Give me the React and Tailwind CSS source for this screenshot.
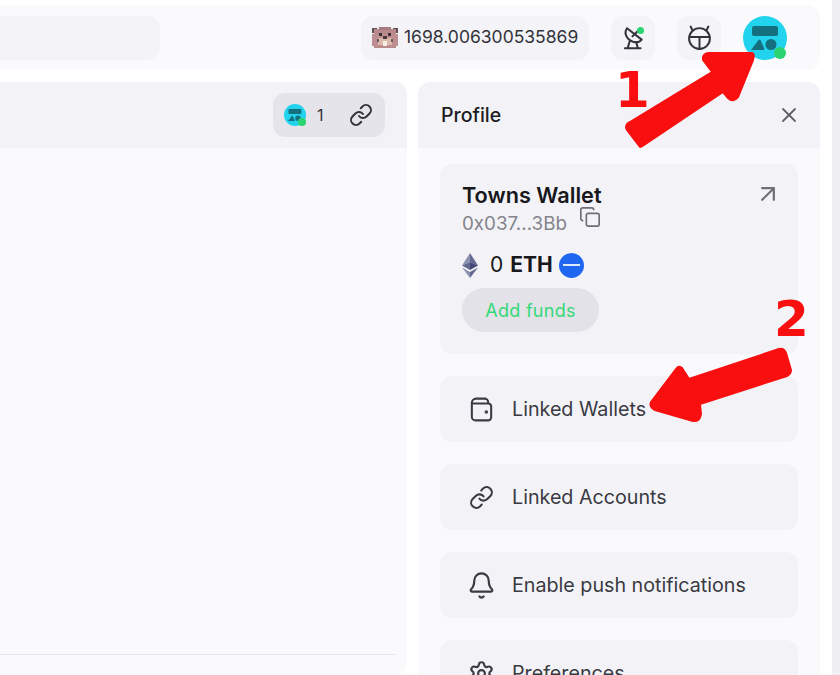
import React from 'react';
import { ArrowUpRight, Bell, Copy, Link, Settings, X } from 'lucide-react';

function Avatar({ size, dot }) {
  return (
    <div className="relative shrink-0" style={{ width: size, height: size }}>
      <svg viewBox="0 0 44 44" className="w-full h-full">
        <circle cx="22" cy="22" r="22" fill="#22d3ee" />
        <rect x="9" y="10" width="26" height="10" rx="2" fill="#14707f" />
        <path d="M8 34 L15.5 24 Q16.5 23 17.5 24 L21 32 Q22 34 20 34 Z" fill="#14707f" />
        <circle cx="28" cy="28.5" r="5.5" fill="#14707f" />
      </svg>
      <div className={`absolute rounded-full bg-[#2bd46f] ${dot}`} />
    </div>
  );
}

function Beaver() {
  return (
    <svg viewBox="0 0 28 24" className="w-[28px] h-[24px]" shapeRendering="crispEdges">
      <rect x="1" y="2" width="5" height="5" fill="#5f4d55" />
      <rect x="22" y="2" width="5" height="5" fill="#5f4d55" />
      <rect x="3" y="3" width="22" height="19" fill="#b98a8c" />
      <rect x="1" y="8" width="26" height="12" fill="#bd8f90" />
      <rect x="8" y="1" width="12" height="3" fill="#a67c82" />
      <rect x="8" y="7" width="3" height="3" fill="#3b3036" />
      <rect x="17" y="7" width="3" height="3" fill="#3b3036" />
      <rect x="7" y="12" width="14" height="7" fill="#dcb9ac" />
      <rect x="12" y="10" width="4" height="3" fill="#4a3a40" />
      <rect x="12" y="15" width="4" height="5" fill="#f5efe6" />
      <rect x="6" y="13" width="2" height="3" fill="#6b5860" />
      <rect x="20" y="13" width="2" height="3" fill="#6b5860" />
    </svg>
  );
}

function EthIcon() {
  return (
    <svg viewBox="0 0 16 25" className="w-[16px] h-[25px] shrink-0">
      <path d="M8 0 L0 12.5 L8 9 Z" fill="#8a92b2" />
      <path d="M8 0 L16 12.5 L8 9 Z" fill="#62688f" />
      <path d="M8 9 L0 12.5 L8 17 Z" fill="#62688f" />
      <path d="M8 9 L16 12.5 L8 17 Z" fill="#454a75" />
      <path d="M0 14.5 L8 25 L8 19 Z" fill="#8a92b2" />
      <path d="M16 14.5 L8 25 L8 19 Z" fill="#62688f" />
    </svg>
  );
}

function WalletIcon() {
  return (
    <svg viewBox="0 0 24 24" className="w-[29px] h-[29px] shrink-0" fill="none" stroke="#3a3a42" strokeWidth="1.7" strokeLinecap="round" strokeLinejoin="round">
      <path d="M17.5 7V5.8A2.8 2.8 0 0 0 14.7 3H7.5A3.5 3.5 0 0 0 4 6.5V18a3 3 0 0 0 3 3h10.5a2.5 2.5 0 0 0 2.5-2.5v-9A2.5 2.5 0 0 0 17.5 7H4" />
      <circle cx="16" cy="14" r="0.6" fill="#3a3a42" />
    </svg>
  );
}

function MenuRow({ icon, label, className }) {
  return (
    <div className={`flex items-center gap-[19px] bg-[#f3f3f7] rounded-xl pl-[29px] pt-[1px] text-[19.7px] text-[#3a3a42] shrink-0 ${className}`}>
      <div className="w-6 h-6 flex items-center justify-center shrink-0">{icon}</div>
      <span>{label}</span>
    </div>
  );
}

function App() {
  return (
    <div className="relative w-[840px] h-[675px] overflow-hidden flex bg-white font-['Inter',sans-serif]">
      <div className="w-[832px] pt-[5px] flex flex-col gap-[12px]">
        {/* top bar */}
        <div className="w-[820px] h-[65px] shrink-0 bg-[#fafafc] rounded-r-xl flex items-center pr-[33px]">
          <div className="w-[160px] h-[44px] bg-[#f4f4f8] rounded-r-xl" />
          <div className="ml-[201px] w-[228px] h-[44px] bg-[#f4f4f8] rounded-xl flex items-center pl-[10px] gap-[5px]">
            <Beaver />
            <span className="text-[17.5px] text-[#33333b]">1698.006300535869</span>
          </div>
          <div className="ml-[22px] relative w-[44px] h-[44px] bg-[#f4f4f8] rounded-xl flex items-center justify-center">
            <svg viewBox="0 0 24 24" className="w-[26px] h-[26px]" fill="none" stroke="#33333b" strokeWidth="1.9" strokeLinecap="round" strokeLinejoin="round">
              <path d="M6.5 3 C3.5 7 5.5 13 12 15.5 C15.5 16.5 18.5 15.5 20 13.5 Z" />
              <path d="M11.5 10.5 L16 6" />
              <path d="M9 15 L7 21.5 M15 16 L16.5 21.5 M4.5 21.5 H19" />
            </svg>
            <div className="absolute top-[11px] right-[11px] w-[7px] h-[7px] rounded-full bg-[#2bd46f]" />
          </div>
          <div className="ml-[22px] w-[44px] h-[44px] bg-[#f4f4f8] rounded-xl flex items-center justify-center">
            <svg viewBox="0 0 24 24" className="w-[25px] h-[25px]" fill="none" stroke="#33333b" strokeWidth="1.9" strokeLinecap="round">
              <circle cx="12" cy="13" r="10" />
              <path d="M2.5 11.5 H21.5 M12 11.5 V23 M5 4.5 L3.5 1.5 M19 4.5 L20.5 1.5" />
            </svg>
          </div>
          <div className="ml-[22px]">
            <Avatar size={44} dot="z-10 w-[12px] h-[12px] right-[1px] bottom-[1px]" />
          </div>
        </div>

        <div className="flex gap-[11px] flex-1 min-h-0">
          {/* channel panel */}
          <div className="w-[407px] bg-[#fafafc] rounded-r-xl flex flex-col">
            <div className="h-[66px] shrink-0 bg-[#f3f3f7] rounded-tr-xl flex items-center justify-end pr-[22px]">
              <div className="w-[112px] h-[44px] bg-[#e4e4ea] rounded-xl flex items-center pl-[11px]">
                <Avatar size={22} dot="w-[8px] h-[8px] right-0 bottom-0" />
                <span className="ml-[11px] text-[16px] text-[#33333b]">1</span>
                <Link className="ml-[25px] text-[#33333b]" size={24} strokeWidth={2} />
              </div>
            </div>
            <div className="mt-[506px] h-[1px] w-[396px] bg-[#e6e6ec]" />
          </div>

          {/* profile panel */}
          <div className="w-[402px] bg-[#fafafc] rounded-t-xl flex flex-col">
            <div className="h-[66px] shrink-0 bg-[#f3f3f7] rounded-t-xl flex items-center justify-between pl-[23px] pr-[19px]">
              <span className="text-[19.5px] pt-[1px] font-medium text-[#1c1c22]">Profile</span>
              <X size={24} strokeWidth={1.8} className="text-[#5f5f68]" />
            </div>
            <div className="pt-[16px] pl-[22px] pr-[22px] flex flex-col gap-[22px]">
              <div className="h-[190px] bg-[#f3f3f7] rounded-xl pt-[18px] pl-[22px] pr-[19px] relative shrink-0">
                <ArrowUpRight size={28} strokeWidth={1.9} className="absolute top-[16px] right-[16px] text-[#6e6e78]" />
                <div className="text-[21.7px] leading-[26px] font-semibold text-[#17171c]">Towns Wallet</div>
                <div className="flex items-start gap-[12px] text-[18.8px] leading-[24px] text-[#84848d] mt-[4px]">
                  <span>0x037...3Bb</span>
                  <Copy size={22} strokeWidth={1.8} className="-mt-[6px] text-[#6e6e78]" />
                </div>
                <div className="flex items-center mt-[16px] h-[26px] text-[21px] text-[#17171c]">
                  <EthIcon />
                  <span className="ml-[12px]">0</span>
                  <span className="ml-[7px] font-bold">ETH</span>
                  <div className="ml-[6px] w-[25px] h-[25px] rounded-full bg-[#1f66f0] flex items-center justify-center">
                    <div className="w-[17px] h-[2px] bg-[#dfe9ff]" />
                  </div>
                </div>
                <div className="mt-[10px] w-[137px] h-[44px] rounded-full bg-[#e2e2e8] flex items-center justify-center text-[18px] tracking-[0.3px] text-[#35d977]">
                  Add funds
                </div>
              </div>
              <MenuRow className="h-[66px]" icon={<WalletIcon />} label="Linked Wallets" />
              <MenuRow className="h-[66px]" icon={<Link size={25} strokeWidth={2} className="shrink-0" />} label="Linked Accounts" />
              <MenuRow className="h-[66px]" icon={<Bell size={29} strokeWidth={1.8} className="shrink-0" />} label="Enable push notifications" />
              <MenuRow className="h-[66px]" icon={<Settings size={27} strokeWidth={1.9} className="shrink-0" />} label="Preferences" />
            </div>
          </div>
        </div>
      </div>
      <div className="w-[8px] bg-[#f0f0f3]" />

      {/* red annotations drawn over the screenshot */}
      <svg className="absolute inset-0 w-[840px] h-[675px] pointer-events-none" viewBox="0 0 840 675" fill="#f90f0f">
        <path d="M640 147 L627 130 Q624 125 630 122 L712 72 L703 60 Q702 54 708 53 L752 53 Q755 54 753 60 L738 97 Q733 103 728 98 L723 92 L644 145 Q641 147 640 147 Z" stroke="#f90f0f" strokeWidth="2" strokeLinejoin="round" />
        <path d="M651 402 L676 369 Q679 365 682 368 L689 379 L779 349 Q784 348 786 353 L791 370 Q791 374 787 376 L700 404 L701 414 Q700 422 693 421 L655 410 Q649 407 651 402 Z" stroke="#f90f0f" strokeWidth="2" strokeLinejoin="round" />
      </svg>
      <div className="absolute left-[615px] top-[60px] text-[50px] leading-[60px] font-black text-[#f90f0f] font-['DejaVu_Sans',sans-serif]">1</div>
      <div className="absolute left-[774px] top-[289px] text-[50px] leading-[60px] font-black text-[#f90f0f] font-['DejaVu_Sans',sans-serif]">2</div>
    </div>
  );
}

export default App;
